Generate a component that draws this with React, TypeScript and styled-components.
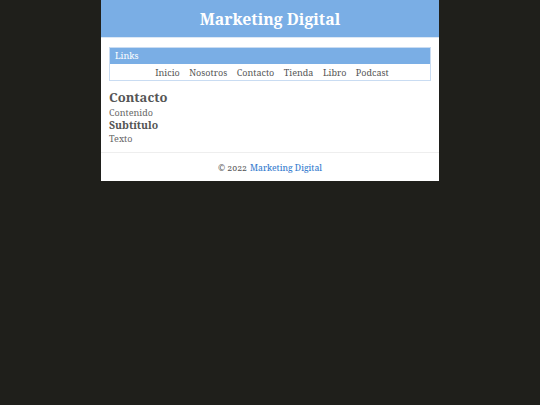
import React from 'react';
import styled, { createGlobalStyle } from 'styled-components';

const GlobalStyle = createGlobalStyle`
  html, body {
    margin: 0;
    padding: 0;
    background: #1f1f1b;
  }
  body {
    font-family: "Noto Serif", "DejaVu Serif", "Liberation Serif", serif;
  }
`;

const Page = styled.div`
  width: 338px;
  margin: 0 auto;
  background: #ffffff;
  color: #555555;
`;

const Header = styled.header`
  height: 37px;
  background: #7aaee5;
  border-bottom: 1px solid #dce8f5;
  display: flex;
  align-items: center;
  justify-content: center;
`;

const Title = styled.h1`
  margin: 0;
  font-size: 15.8px;
  font-weight: 700;
  color: #ffffff;
`;

const Main = styled.main`
  padding: 9px 8px 0;
`;

const LinksBox = styled.nav`
  border: 1px solid #c9dcf2;
`;

const LinksHeader = styled.div`
  height: 16px;
  background: #7aaee5;
  color: #ffffff;
  font-size: 9px;
  line-height: 16px;
  padding: 0 5px;
`;

const LinksRow = styled.ul`
  list-style: none;
  margin: 0;
  padding: 0 0 0 4px;
  height: 16px;
  display: flex;
  justify-content: center;
  align-items: center;
  gap: 9.5px;
`;

const LinkItem = styled.li`
  font-size: 9px;
  color: #555555;
`;

const Content = styled.section`
  padding: 7px 0 7px;
`;

const Heading = styled.h2<{ size: number; lh: number }>`
  margin: 0;
  font-size: ${({ size }) => size}px;
  line-height: ${({ lh }) => lh}px;
  font-weight: 700;
  color: #555555;
`;

const Text = styled.p`
  margin: 0;
  font-size: 9px;
  line-height: 13px;
  color: #666666;
`;

const Footer = styled.footer`
  border-top: 1px solid #eeeeee;
  height: 28px;
  display: flex;
  align-items: center;
  justify-content: center;
  font-size: 8.5px;
  color: #555555;
  font-variant-numeric: oldstyle-nums;
`;

const FooterLink = styled.a`
  color: #3a7fd0;
  text-decoration: none;
  margin-left: 3px;
  font-weight: 500;
`;

const links = ['Inicio', 'Nosotros', 'Contacto', 'Tienda', 'Libro', 'Podcast'];

const App: React.FC = () => {
  return (
    <>
      <GlobalStyle />
      <Page>
        <Header>
          <Title>Marketing Digital</Title>
        </Header>
        <Main>
          <LinksBox>
            <LinksHeader>Links</LinksHeader>
            <LinksRow>
              {links.map((l) => (
                <LinkItem key={l}>{l}</LinkItem>
              ))}
            </LinksRow>
          </LinksBox>
          <Content>
            <Heading size={13} lh={18}>Contacto</Heading>
            <Text>Contenido</Text>
            <Heading size={10.5} lh={13}>Subtítulo</Heading>
            <Text>Texto</Text>
          </Content>
        </Main>
        <Footer>
          © 2022<FooterLink href="#">Marketing Digital</FooterLink>
        </Footer>
      </Page>
    </>
  );
};

export default App;
